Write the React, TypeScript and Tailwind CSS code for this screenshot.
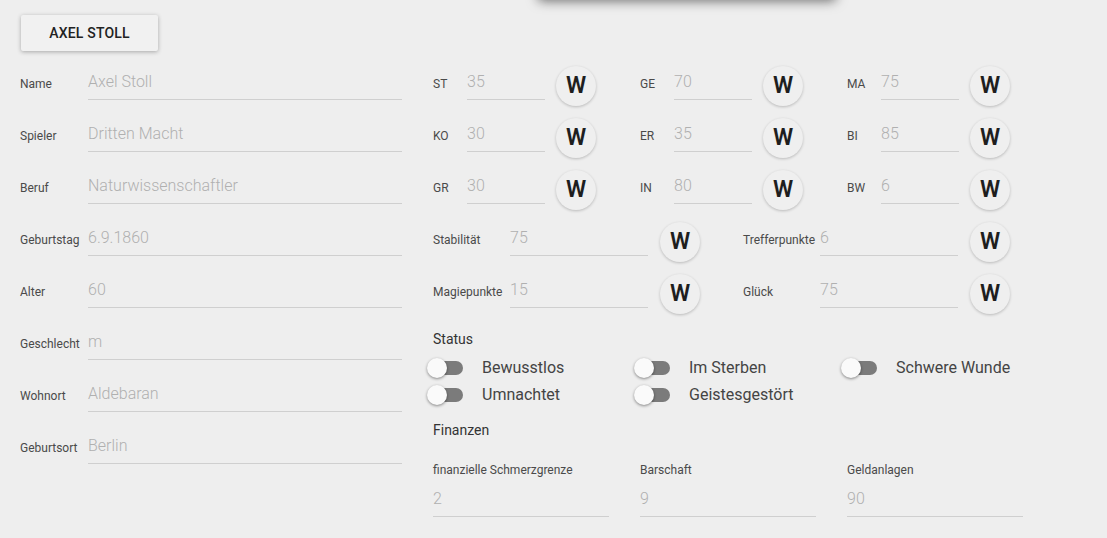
import React from "react";

const leftRows: [string, string][] = [
  ["Name", "Axel Stoll"],
  ["Spieler", "Dritten Macht"],
  ["Beruf", "Naturwissenschaftler"],
  ["Geburtstag", "6.9.1860"],
  ["Alter", "60"],
  ["Geschlecht", "m"],
  ["Wohnort", "Aldebaran"],
  ["Geburtsort", "Berlin"],
];

const attrRows: [string, string][][] = [
  [["ST", "35"], ["GE", "70"], ["MA", "75"]],
  [["KO", "30"], ["ER", "35"], ["BI", "85"]],
  [["GR", "30"], ["IN", "80"], ["BW", "6"]],
];

const derived: [string, string][][] = [
  [["Stabilität", "75"], ["Trefferpunkte", "6"]],
  [["Magiepunkte", "15"], ["Glück", "75"]],
];

function WButton() {
  return (
    <div className="mt-[3px] flex h-[40px] w-[40px] shrink-0 items-center justify-center rounded-full bg-[#efefef] text-[23px] font-semibold leading-none text-[#1e1e1e] shadow-[0_1px_3px_rgba(0,0,0,0.22)]">
      W
    </div>
  );
}

function Value({ v, w }: { v: string; w: string }) {
  return (
    <div className={`flex h-[31px] items-center border-b border-[#cfcfcf] pb-[4px] text-[16px] font-light text-[#b0b0b0] ${w}`}>
      {v}
    </div>
  );
}

function Switch({ label }: { label: string }) {
  return (
    <div className="w-[207px]">
      <div className="-ml-[6px] flex h-[27px] items-center">
        <div className="relative h-[20px] w-[36px] shrink-0">
          <div className="absolute left-[4px] top-[3px] h-[14px] w-[32px] rounded-full bg-[#7b7b7b]" />
          <div className="absolute left-0 top-0 h-[20px] w-[20px] rounded-full bg-[#fafafa] shadow-[0_1px_3px_rgba(0,0,0,0.45)]" />
        </div>
        <span className="ml-[19px] text-[16px] text-[#444]">{label}</span>
      </div>
    </div>
  );
}

export default function App() {
  return (
    <div className="relative min-h-[538px] w-full overflow-hidden bg-[#eeeeee] font-['Roboto',sans-serif]">
      <div className="absolute left-[538px] top-[-50px] h-[48px] w-[298px] rounded-[4px] bg-[#e8e8e8] shadow-[0_3px_12px_rgba(0,0,0,0.55)]" />
      <div className="px-[20px] pt-[15px]">
        <div className="ml-[1px] flex h-[36px] w-[137px] items-center justify-center rounded-[2px] bg-[#f1f1f1] text-[14px] font-medium tracking-[0.2px] text-[#222] shadow-[0_1px_4px_rgba(0,0,0,0.3)]">
          AXEL STOLL
        </div>
        <div className="mt-[7px] flex">
          <div className="w-[382px]">
            {leftRows.map(([l, v]) => (
              <div key={l} className="flex h-[52px] items-center">
                <div className="w-[68px] shrink-0 text-[12px] text-[#4a4a4a]">{l}</div>
                <Value v={v} w="flex-1" />
              </div>
            ))}
          </div>
          <div className="ml-[31px] flex-1">
            {attrRows.map((row, i) => (
              <div key={i} className="flex h-[52px] items-center">
                {row.map(([l, v]) => (
                  <div key={l} className="flex w-[207px] items-center">
                    <div className="w-[34px] shrink-0 text-[12px] text-[#4a4a4a]">{l}</div>
                    <Value v={v} w="w-[78px]" />
                    <div className="ml-[11px]">
                      <WButton />
                    </div>
                  </div>
                ))}
              </div>
            ))}
            {derived.map((row, i) => (
              <div key={i} className="flex h-[52px] items-center">
                {row.map(([l, v]) => (
                  <div key={l} className="flex w-[310px] items-center">
                    <div className="w-[77px] shrink-0 text-[12px] text-[#4a4a4a]">{l}</div>
                    <Value v={v} w="w-[138px]" />
                    <div className="ml-[12px]">
                      <WButton />
                    </div>
                  </div>
                ))}
              </div>
            ))}
            <div className="mt-[11px] h-[20px] text-[14px] leading-[20px] text-[#333]">Status</div>
            <div className="mt-[5px] flex">
              <Switch label="Bewusstlos" />
              <Switch label="Im Sterben" />
              <Switch label="Schwere Wunde" />
            </div>
            <div className="flex">
              <Switch label="Umnachtet" />
              <Switch label="Geistesgestört" />
            </div>
            <div className="mt-[12px] h-[20px] text-[14px] leading-[20px] text-[#333]">Finanzen</div>
            <div className="mt-[22px] flex">
              {[
                ["finanzielle Schmerzgrenze", "2"],
                ["Barschaft", "9"],
                ["Geldanlagen", "90"],
              ].map(([l, v]) => (
                <div key={l} className="w-[207px]">
                  <div className="h-[16px] text-[12px] leading-[16px] text-[#4a4a4a]">{l}</div>
                  <div className="flex h-[39px] w-[176px] items-center border-b border-[#cfcfcf] pt-[3px] text-[16px] font-light text-[#b0b0b0]">
                    {v}
                  </div>
                </div>
              ))}
            </div>
          </div>
        </div>
      </div>
    </div>
  );
}
